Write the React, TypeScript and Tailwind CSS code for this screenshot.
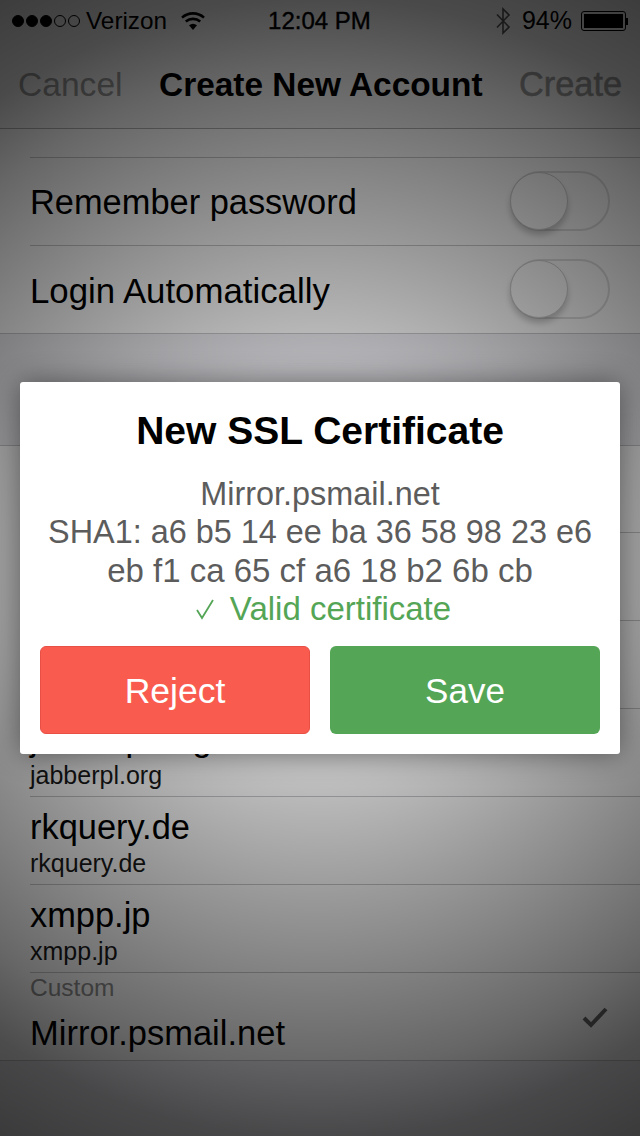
import React from "react";

function Toggle() {
  return (
    <div className="relative -mt-[2px] w-[100px] h-[60px] rounded-full border-2 border-[#e0e0e0] bg-white">
      <div className="absolute -left-[2px] -top-[1px] w-[58px] h-[58px] rounded-full bg-white border border-[#cfcfcf] shadow-[0_5px_6px_rgba(0,0,0,0.22)]" />
    </div>
  );
}

function ServerRow({ title, sub, h }: { title?: string; sub?: string; h: string }) {
  return (
    <div className={`ml-[30px] ${h} border-b border-[#c8c7cc] flex flex-col justify-start pt-[10px] text-black`}>
      <span className="text-[34.4px] leading-[40px]">{title}</span>
      <span className="text-[25px] leading-[28px] mt-[2px] text-[#1a1a1a]">{sub}</span>
    </div>
  );
}

export default function App() {
  return (
    <div
      className="relative w-[640px] h-[1136px] overflow-hidden bg-[#efeff4] text-black"
      style={{ fontFamily: '"Liberation Sans", Arial, sans-serif' }}
    >
      <div className="h-[129px] bg-[#f8f8f8] border-b border-[#b2b2b2] flex flex-col">
        <div className="h-[42px] px-[12px] flex items-center text-[24px] relative">
          <div className="flex items-center gap-[2px]">
            {[1, 1, 1, 0, 0].map((f, i) => (
              <span
                key={i}
                className={
                  f
                    ? "w-[12px] h-[12px] rounded-full bg-black border border-black"
                    : "w-[12px] h-[12px] rounded-full border border-black"
                }
              />
            ))}
          </div>
          <span className="ml-[6px] text-[24.3px]">Verizon</span>
          <svg className="ml-[13px]" width="26" height="20" viewBox="0 0 26 20">
            <path d="M13 19 L9 14.2 A6.5 6.5 0 0 1 17 14.2 Z" fill="#000" />
            <path d="M5.8 10.6 A11 11 0 0 1 20.2 10.6" stroke="#000" strokeWidth="2.6" fill="none" />
            <path d="M2 6.6 A16.5 16.5 0 0 1 24 6.6" stroke="#000" strokeWidth="2.6" fill="none" />
          </svg>
          <span className="ml-[62px] [-webkit-text-stroke:0.4px_black]">12:04 PM</span>
          <svg className="ml-auto" width="18" height="28" viewBox="0 0 18 28">
            <path d="M3 7.5 L15 20 L9 26 V2 L15 8 L3 20.5" stroke="#555" strokeWidth="1.6" fill="none" />
          </svg>
          <span className="ml-[10px] mr-[2px] text-[25px]">94%</span>
          <div className="ml-[7px] flex items-center">
            <div className="w-[45px] h-[20px] border border-black p-[2px] rounded-[3px]">
              <div className="w-full h-full bg-black" />
            </div>
            <div className="w-[2px] h-[7px] bg-black" />
          </div>
        </div>
        <div className="flex-1 flex items-center justify-between pl-[18px] pr-[18px]">
          <span className="text-[33.6px] text-[#9b9b9b]">Cancel</span>
          <span className="text-[33.4px] font-bold">Create New Account</span>
          <span className="text-[34.3px] font-normal text-[#9b9b9b] [-webkit-text-stroke:0.5px_#9b9b9b]">Create</span>
        </div>
      </div>

      <div className="h-[28px] bg-white" />
      <div className="bg-white pl-[30px]">
        <div className="border-t border-[#c8c7cc]" />
        <div className="h-[88px] flex items-center justify-between pr-[30px] border-b border-[#c8c7cc]">
          <span className="text-[34.4px] pt-[3px]">Remember password</span>
          <Toggle />
        </div>
        <div className="h-[87px] flex items-center justify-between pr-[30px]">
          <span className="text-[34.8px] pt-[3px]">Login Automatically</span>
          <Toggle />
        </div>
      </div>
      <div className="border-t border-[#c8c7cc]" />

      <div className="h-[111px]" />
      <div className="bg-white border-t border-[#c8c7cc]">
        <ServerRow h="h-[87px]" />
        <ServerRow h="h-[88px]" />
        <ServerRow h="h-[88px]" />
        <ServerRow h="h-[88px]" title="jabberpl.org" sub="jabberpl.org" />
        <ServerRow h="h-[88px]" title="rkquery.de" sub="rkquery.de" />
        <ServerRow h="h-[88px]" title="xmpp.jp" sub="xmpp.jp" />
        <div className="h-[88px] border-b border-[#c8c7cc] pl-[30px] pr-[30px] relative">
          <div className="text-[24.5px] leading-[28px] text-[#8e8e8e] pt-[1px]">Custom</div>
          <div className="text-[34.5px] leading-[40px] mt-[11px]">Mirror.psmail.net</div>
          <svg className="absolute right-[32px] top-[34px]" width="26" height="21" viewBox="0 0 26 21">
            <path d="M2 11 L9 18 L24 2" stroke="#666" strokeWidth="4" fill="none" />
          </svg>
        </div>
      </div>

      <div className="absolute inset-0 pointer-events-none bg-[radial-gradient(circle_at_center,rgba(0,0,0,0.2)_0px,rgba(0,0,0,0.24)_200px,rgba(0,0,0,0.4)_330px,rgba(0,0,0,0.6)_500px,rgba(0,0,0,0.7)_570px,rgba(0,0,0,0.76)_660px)]" />

      <div className="absolute left-[20px] top-[382px] w-[600px] h-[372px] bg-white rounded-[3px] shadow-[0_0_28px_rgba(0,0,0,0.45)] flex flex-col items-center px-[20px] pt-[26px]">
        <div className="text-[39px] leading-[46px] font-bold text-black">New SSL Certificate</div>
        <div className="mt-[21px] text-[32.4px] leading-[38.3px] text-[#5c5c5c] text-center">
          <div>Mirror.psmail.net</div>
          <div>SHA1: a6 b5 14 ee ba 36 58 98 23 e6</div>
          <div className="text-[33px]">eb f1 ca 65 cf a6 18 b2 6b cb</div>
          <div className="flex items-center justify-center gap-[15px] pl-[6px] text-[#54a556]">
            <svg width="20" height="22" viewBox="0 0 20 22" role="img" aria-label="check">
              <path d="M2 12 L7 20 L18 2" stroke="#54a556" strokeWidth="1.8" fill="none" />
            </svg>
            <span className="text-[33px]">Valid certificate</span>
          </div>
        </div>
        <div className="mt-[18px] w-full flex justify-between">
          <button className="w-[270px] h-[88px] pt-[3px] rounded-[6px] bg-[#f95c4f] border border-[#e84f45] text-white text-[35.5px]">Reject</button>
          <button className="w-[270px] h-[88px] pt-[3px] rounded-[6px] bg-[#54a556] text-white text-[35px]">Save</button>
        </div>
      </div>
    </div>
  );
}
